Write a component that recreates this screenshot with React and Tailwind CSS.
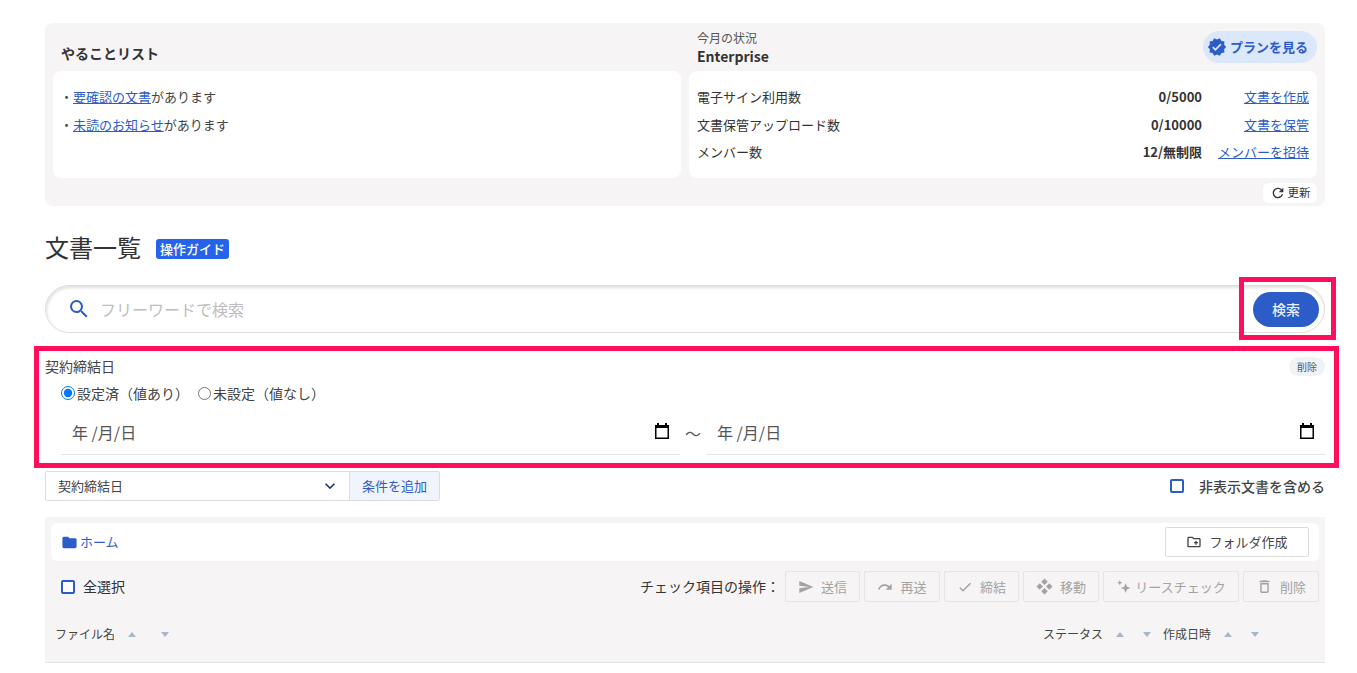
import React from "react";
import {
  MdVerified,
  MdRefresh,
  MdFolder,
  MdOutlineCreateNewFolder,
  MdSend,
  MdRedo,
  MdCheck,
  MdOutlineDelete,
  MdKeyboardArrowDown,
  MdSearch,
} from "react-icons/md";

const font = "font-['Noto_Sans_CJK_JP','Noto_Sans',sans-serif]";

const CalendarIcon = () => (
  <svg width="16" height="18" viewBox="0 0 16 18" className="shrink-0 mb-[3px]">
    <path d="M3 1h2v2h6V1h2v2h2v14H1V3h2z M2.500 6v9.500h11V6z" fill="#000" fillRule="evenodd" />
  </svg>
);

const MoveIcon = () => (
  <svg width="17" height="17" viewBox="0 0 16 16" fill="currentColor">
    <path d="M8 .5l3 3-3 3-3-3z" />
    <path d="M3.500 5l3 3-3 3-3-3z" />
    <path d="M12.500 5l3 3-3 3-3-3z" />
    <path d="M8 9.500l3 3-3 3-3-3z" />
  </svg>
);

const SparkleIcon = () => (
  <svg width="15" height="15" viewBox="0 0 14 14" fill="currentColor">
    <path d="M9 4l1.200 3.300L13.500 8.500l-3.300 1.200L9 13 7.800 9.700 4.500 8.500l3.300-1.200z" />
    <path d="M3.500 1l.7 1.800L6 3.500l-1.800.7L3.500 6l-.7-1.800L1 3.500l1.800-.7z" />
  </svg>
);

const Checkbox = () => (
  <span className="w-[14px] h-[14px] border-2 border-[#2b5cc8] rounded-[2px] bg-white shrink-0" />
);

const SortArrows = ({ gap }) => (
  <span className={`flex items-center ${gap}`}>
    <span className="w-0 h-0 border-x-[4px] border-x-transparent border-b-[5px] border-b-[#a9b5c9]" />
    <span className="w-0 h-0 border-x-[4px] border-x-transparent border-t-[5px] border-t-[#a9b5c9]" />
  </span>
);

const UsageRow = ({ label, value, link }) => (
  <div className="flex items-center h-[27.500px] text-[13px] text-[#333]">
    <span className="flex-1">{label}</span>
    <span className="font-bold">{value}</span>
    <a className="w-[107px] text-right text-[#2b5cc8] underline">{link}</a>
  </div>
);

const ActionButton = ({ width, gap, icon, label }) => (
  <button
    className={`${width} ${gap} h-[31px] flex items-center justify-center border border-[#e6e4e5] rounded-[2px] text-[13px] text-[#a3a3a3]`}
  >
    {icon}
    <span>{label}</span>
  </button>
);

const DateField = () => (
  <div className="flex-1 h-[45px] border-b border-[#e5e5e5] flex items-center justify-between pl-[11px] pr-[10px] text-[16px] text-[#555]">
    <span>年 /月/日</span>
    <CalendarIcon />
  </div>
);

const App = () => {
  return (
    <div className={`relative w-[1357px] h-[673px] overflow-hidden bg-white ${font}`}>
      <div className="w-[1280px] ml-[45px] pt-[23px]">
        {/* Top panel */}
        <div className="h-[183px] bg-[#f6f4f5] rounded-lg px-2">
          <div className="flex gap-2">
            <div className="flex-1 min-w-0">
              <div className="h-[48px] flex items-end pb-[8px] pl-2">
                <h2 className="text-[14px] leading-[20px] font-bold text-[#333]">やることリスト</h2>
              </div>
              <div className="h-[107px] bg-white rounded-lg pl-[7px] pr-2 pt-[13px] text-[13px] text-[#444]">
                <p className="h-[27px] leading-[26px]">
                  ・<a className="text-[#2b5cc8] underline">要確認の文書</a>があります
                </p>
                <p className="h-[27px] leading-[28px]">
                  ・<a className="text-[#2b5cc8] underline">未読のお知らせ</a>があります
                </p>
              </div>
            </div>
            <div className="flex-1 min-w-0">
              <div className="h-[48px] flex items-center justify-between pl-2 pb-[1px]">
                <div className="pt-[2px]">
                  <p className="text-[12px] leading-[16px] text-[#555]">今月の状況</p>
                  <p className="text-[14px] leading-[20px] font-bold text-[#333]">Enterprise</p>
                </div>
                <button className="w-[114px] h-[32px] mb-[-1px] pl-[4px] flex items-center gap-[3px] rounded-full bg-[#dbe7fb] text-[13px] font-bold text-[#2b5cc8]">
                  <MdVerified size={20} />
                  プランを見る
                </button>
              </div>
              <div className="h-[107px] bg-white rounded-lg px-2 pt-[12px]">
                <UsageRow label="電子サイン利用数" value="0/5000" link="文書を作成" />
                <UsageRow label="文書保管アップロード数" value="0/10000" link="文書を保管" />
                <UsageRow label="メンバー数" value="12/無制限" link="メンバーを招待" />
              </div>
              <div className="flex justify-end pt-[5px]">
                <button className="w-[54px] h-[20px] bg-white rounded-md flex items-center justify-center gap-[2px] text-[11.500px] text-[#333]">
                  <MdRefresh size={16} />
                  更新
                </button>
              </div>
            </div>
          </div>
        </div>

        {/* Title */}
        <div className="h-[79px] flex items-center gap-[15px] pt-[6px]">
          <h1 className="text-[24px] font-normal text-[#333] mt-[-4px]">文書一覧</h1>
          <span className="w-[73px] h-[20px] bg-[#2563eb] rounded-[3px] flex items-center justify-center text-[13px] font-medium text-white">
            操作ガイド
          </span>
        </div>

        {/* Search */}
        <div className="h-[48px] rounded-full border border-[#dedede] shadow-[inset_1px_2px_3px_rgba(0,0,0,0.12)] flex items-center pl-[21px] pr-[5px]">
          <MdSearch size={24} className="text-[#2b5cc8] mr-[9px]" />
          <span className="flex-1 text-[16px] text-[#bdbdbd]">フリーワードで検索</span>
          <button className="w-[66px] h-[35px] rounded-full bg-[#2b5cc8] text-[14px] font-medium text-[#e8eefb]">
            検索
          </button>
        </div>

        {/* Condition */}
        <div className="h-[138px] pt-[24px]">
          <div className="flex items-center justify-between h-[19px]">
            <span className="text-[14px] text-[#444]">契約締結日</span>
            <span className="w-[36px] h-[19px] rounded-full bg-[#f0f2f5] flex items-center justify-center text-[10px] text-[#555]">
              削除
            </span>
          </div>
          <div className="flex items-center h-[20px] mt-[7px] ml-4 text-[14px] text-[#444]">
            <label className="flex items-center gap-[2px] mr-[9px]">
              <input type="radio" name="cond" defaultChecked className="w-[14px] h-[14px] m-0 accent-[#0075ff]" />
              設定済（値あり）
            </label>
            <label className="flex items-center gap-[2px]">
              <input type="radio" name="cond" className="w-[13px] h-[13px] m-0" />
              未設定（値なし）
            </label>
          </div>
          <div className="flex items-center mt-[7px] ml-4">
            <DateField />
            <span className="w-[26px] text-center text-[16px] text-[#555]">〜</span>
            <DateField />
          </div>
        </div>

        {/* Add condition */}
        <div className="h-[30px] flex items-center justify-between">
          <div className="flex h-[30px] w-[395px] border border-[#dcdcdc] rounded-[2px] text-[13px]">
            <div className="w-[303px] flex items-center justify-between pl-3 pr-[9px] text-[#444]">
              契約締結日
              <MdKeyboardArrowDown size={20} className="text-[#1e3a6e]" />
            </div>
            <button className="flex-1 bg-[#f0f4fc] border-l border-[#dcdcdc] text-[#2b5cc8]">条件を追加</button>
          </div>
          <label className="flex items-center gap-[15px] text-[14px] font-medium text-[#444]">
            <Checkbox />
            非表示文書を含める
          </label>
        </div>

        {/* File list */}
        <div className="mt-[16px] h-[146px] bg-[#f6f4f5] border-b border-[#e5e5e5] px-[6px] pt-[6px]">
          <div className="h-[38px] bg-white rounded-md flex items-center justify-between pl-[10px] pr-[10px]">
            <a className="flex items-center gap-[2px] text-[13px] text-[#2b5cc8]">
              <MdFolder size={17} />
              ホーム
            </a>
            <button className="w-[144px] h-[30px] border border-[#dcdcdc] rounded-[2px] flex items-center justify-center gap-[7px] text-[13px] text-[#444]">
              <MdOutlineCreateNewFolder size={16} />
              フォルダ作成
            </button>
          </div>
          <div className="h-[31px] mt-[10px] flex items-center justify-between">
            <label className="flex items-center gap-[8px] pl-[10px] text-[14px] text-[#333]">
              <Checkbox />
              全選択
            </label>
            <div className="flex items-center gap-[4px]">
              <span className="text-[14px] text-[#333] mr-[1px]">チェック項目の操作：</span>
              <ActionButton width="w-[75px]" gap="gap-[7px]" icon={<MdSend size={16} />} label="送信" />
              <ActionButton width="w-[76px]" gap="gap-[7px]" icon={<MdRedo size={16} />} label="再送" />
              <ActionButton width="w-[75px]" gap="gap-[7px]" icon={<MdCheck size={16} />} label="締結" />
              <ActionButton width="w-[76px]" gap="gap-[7px]" icon={<MoveIcon />} label="移動" />
              <ActionButton width="w-[136px]" gap="gap-[4px]" icon={<SparkleIcon />} label="リースチェック" />
              <ActionButton width="w-[76px]" gap="gap-[7px]" icon={<MdOutlineDelete size={17} />} label="削除" />
            </div>
          </div>
          <div className="h-[32px] mt-[16px] flex items-center justify-between pl-[4px] pr-[60px] text-[12px] text-[#444]">
            <div className="flex items-center gap-[13px]">
              ファイル名
              <SortArrows gap="gap-[25px]" />
            </div>
            <div className="flex items-center">
              ステータス
              <span className="ml-[13px] mr-[12px]">
                <SortArrows gap="gap-[19px]" />
              </span>
              作成日時
              <span className="ml-[13px]">
                <SortArrows gap="gap-[19px]" />
              </span>
            </div>
          </div>
        </div>
      </div>

      {/* annotation boxes drawn over the screenshot */}
      <div className="absolute left-[1239px] top-[277px] w-[97px] h-[63px] border-[5px] border-[#ff0f5b]" />
      <div className="absolute left-[34px] top-[346px] w-[1305px] h-[122px] border-[5px] border-[#ff0f5b]" />
    </div>
  );
};

export default App;
